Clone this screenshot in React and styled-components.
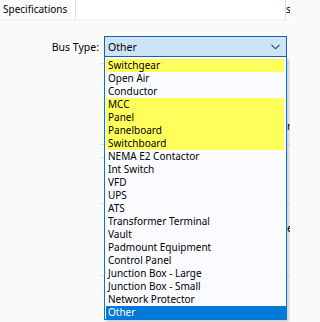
import React from "react";
import styled, { createGlobalStyle } from "styled-components";

const GlobalStyle = createGlobalStyle`
  html, body {
    margin: 0;
    padding: 0;
    background: #fafafa;
  }
  body {
    font-family: "Noto Sans", "Open Sans", sans-serif;
    font-size: 10px;
    color: #000;
  }
`;

const busTypes = [
  { name: "Switchgear", flagged: true },
  { name: "Open Air" },
  { name: "Conductor" },
  { name: "MCC", flagged: true },
  { name: "Panel", flagged: true },
  { name: "Panelboard", flagged: true },
  { name: "Switchboard", flagged: true },
  { name: "NEMA E2 Contactor" },
  { name: "Int Switch" },
  { name: "VFD" },
  { name: "UPS" },
  { name: "ATS" },
  { name: "Transformer Terminal" },
  { name: "Vault" },
  { name: "Padmount Equipment" },
  { name: "Control Panel" },
  { name: "Junction Box - Large" },
  { name: "Junction Box - Small" },
  { name: "Network Protector" },
  { name: "Other" },
];

// form content lying under the open list; only its edges show
const underRows = [
  { height: 7, line: true },
  { height: 55 },
  { height: 14, text: "n" },
  { height: 12, line: true },
  { height: 13, line: true },
  { height: 46, line: true },
  { height: 17 },
  { height: 14, text: "e" },
  { height: 41, line: true },
];

const App = () => {
  const selected = "Other";
  return (
    <Page>
      <GlobalStyle />
      <TabStrip>
        <Tab>Specifications</Tab>
        <TabFiller />
        <NextTab>s</NextTab>
      </TabStrip>
      <FormRow>
        <Label>Bus Type:</Label>
        <SelectWrap>
          <Select>
            <span>{selected}</span>
            <svg width="9" height="6" viewBox="0 0 9 6">
              <path d="M0.5 0.8 L4.5 4.8 L8.5 0.8" fill="none" stroke="#404040" strokeWidth="1.1" />
            </svg>
          </Select>
          <List>
            {busTypes.map(item => (
              <Item
                key={item.name}
                $flagged={item.flagged}
                $selected={item.name === selected}
              >
                {item.name}
              </Item>
            ))}
          </List>
        </SelectWrap>
      </FormRow>
      <Underlay>
        {underRows.map((row, i) => (
          <UnderRow key={i} $height={row.height} $line={row.line}>
            {row.text && <UnderText>{row.text}</UnderText>}
          </UnderRow>
        ))}
      </Underlay>
    </Page>
  );
};

export default App;

const Page = styled.div`
  position: relative;
  width: 290px;
  height: 322px;
  overflow: hidden;
  background: #fafafa;
`;

const TabStrip = styled.div`
  display: flex;
  height: 19px;
  background: #ffffff;
  border-bottom: 1px solid #f0f0f0;
`;

const Tab = styled.div`
  width: 72px;
  padding: 1px 0 0 3px;
  box-sizing: border-box;
  font-size: 10px;
  line-height: 16px;
  background: #fbfbfb;
`;

const TabFiller = styled.div`
  flex: 1;
  margin-left: 3px;
  border-left: 1px solid #dedede;
  border-right: 1px solid #dedede;
  background: #ffffff;
`;

const NextTab = styled.div`
  width: 4px;
  overflow: hidden;
  font-size: 10px;
  line-height: 16px;
  padding-top: 1px;
`;

const FormRow = styled.div`
  position: relative;
  z-index: 2;
  display: flex;
  align-items: center;
  margin-top: 16px;
`;

const Label = styled.div`
  width: 104px;
  padding-right: 5px;
  text-align: right;
  box-sizing: border-box;
  font-size: 10.5px;
`;

const SelectWrap = styled.div`
  position: relative;
  width: 183px;
`;

const Select = styled.div`
  display: flex;
  align-items: center;
  justify-content: space-between;
  height: 19px;
  padding: 0 6px 0 3px;
  background: #cce4f7;
  border: 1px solid #1e5fa8;
  font-size: 10.5px;
  svg {
    margin-top: 1px;
  }
`;

const List = styled.div`
  position: absolute;
  top: 21px;
  left: 0;
  right: 0;
  height: 263px;
  padding: 2px 2px 0 1px;
  background: #fafbff;
  border: 1px solid #0078d7;
  border-top: none;
  box-sizing: border-box;
  box-shadow: 2px 2px 3px rgba(0, 0, 0, 0.18);
`;

const Item = styled.div`
  height: 13px;
  line-height: 13px;
  padding-left: 2px;
  white-space: nowrap;
  margin-right: ${p => (p.$selected ? "-2px" : "0")};
  background: ${p =>
    p.$selected ? "#0078d7" : p.$flagged ? "#ffff5c" : "transparent"};
  color: ${p => (p.$selected ? "#ffffff" : "#000000")};
`;

const Underlay = styled.div`
  margin-left: 100px;
  margin-right: -10px;
`;

const UnderRow = styled.div`
  display: flex;
  justify-content: flex-end;
  align-items: center;
  height: ${p => p.$height}px;
  border-bottom: ${p => (p.$line ? "1px solid #e2e2e2" : "none")};
  box-sizing: border-box;
`;

const UnderText = styled.span`
  width: 13px;
  font-size: 11px;
  line-height: 14px;
`;
